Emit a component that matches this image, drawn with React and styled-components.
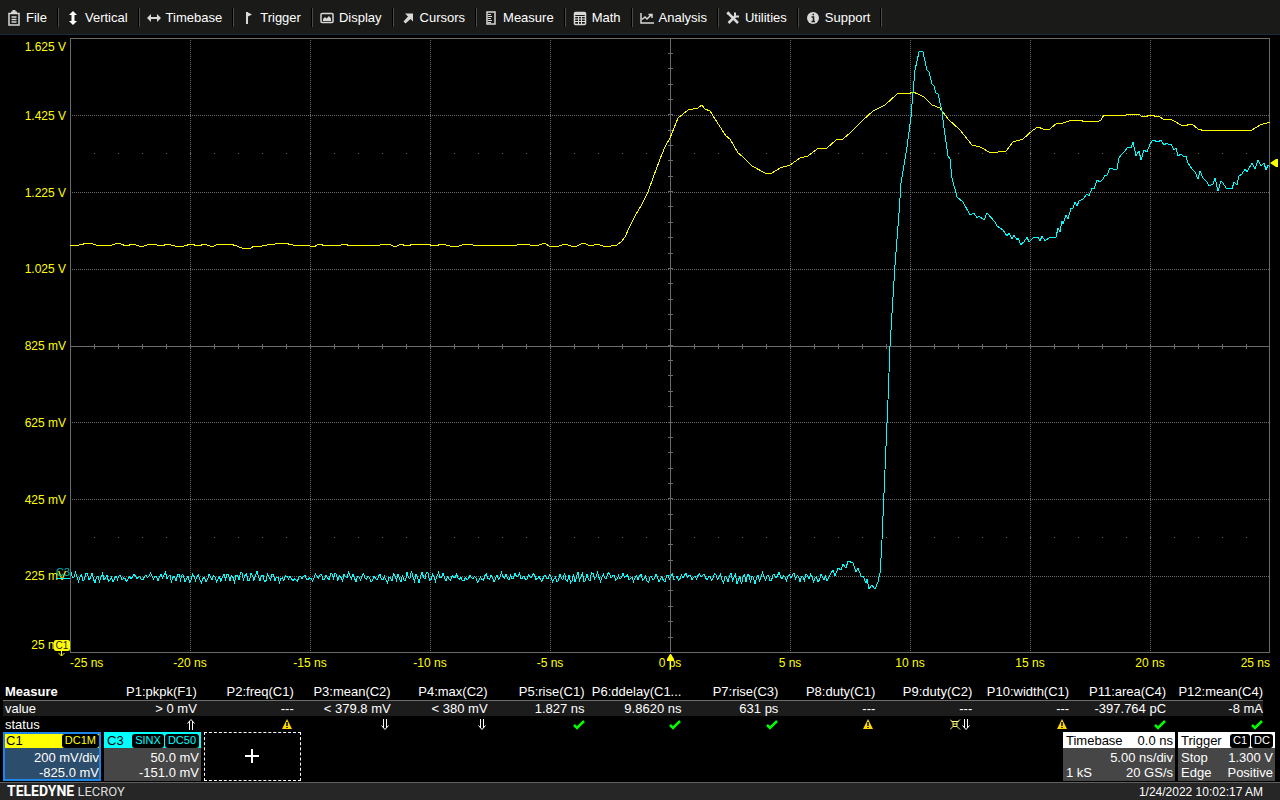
import styled, { createGlobalStyle } from 'styled-components';

const GlobalStyle = createGlobalStyle`
  * {
    box-sizing: border-box;
  }
  body {
    margin: 0;
    background: #000;
    color: #fff;
    font: 13px/16px "Liberation Sans", Arial, sans-serif;
  }
  button {
    margin: 0;
    color: inherit;
    font: inherit;
    cursor: pointer;
  }
`;

const Screen = styled.div`
  display: flex;
  flex-direction: column;
  height: 100vh;
  min-height: 480px;
`;

const MenuBar = styled.nav`
  display: flex;
  align-items: center;
  height: 35px;
  flex-shrink: 0;
  background: #1a1a18;
  border-bottom: 1px solid #1c2b3b;
`;

const MenuButton = styled.button`
  display: flex;
  align-items: center;
  gap: 5px;
  height: 19px;
  padding: 1px 11px 0 7px;
  background: none;
  border: 0;
  border-right: 1px solid #4a4a48;
  box-shadow: inset -1px 0 0 #000;
`;

const MenuIcon = styled.svg`
  width: 14px;
  height: 16px;
  fill: none;
  stroke: #d8d8d8;
  stroke-width: 1.5;
`;

const Scope = styled.main`
  display: grid;
  grid-template: minmax(0, 1fr) 31px / 70px minmax(0, 1fr);
  flex: 1;
  min-height: 0;
  padding: 3px 10px 0 0;
  color: #ff0;
  font-size: 12px;
`;

const VoltAxis = styled.div`
  position: relative;
  display: grid;
  grid-template-rows: 1fr repeat(7, 2fr) 1fr;
  align-items: center;
  justify-items: end;
  padding: 1px 4px 0 0;

  span:first-child {
    align-self: start;
  }
  span:nth-child(9) {
    align-self: end;
  }
`;

const TimeAxis = styled.div`
  position: relative;
  grid-column: 2;
  display: grid;
  grid-template-columns: 1fr repeat(9, 2fr) 1fr;
  justify-items: center;
  padding-top: 2px;
  white-space: nowrap;

  span:first-child {
    justify-self: start;
  }
  span:nth-child(11) {
    justify-self: end;
  }
`;

const Plot = styled.div`
  position: relative;
  min-height: 0;
`;

const PlotSvg = styled.svg`
  display: block;
  width: 100%;
  height: 100%;
  fill: none;
  stroke-width: 1;
  shape-rendering: crispEdges;

  path,
  polyline,
  line,
  rect {
    vector-effect: non-scaling-stroke;
  }
`;

const LevelMarker = styled.svg`
  position: absolute;
  top: 20%;
  left: 100%;
  width: 9px;
  height: 8px;
  margin-top: -2px;
  fill: #ff0;
`;

const DelayMarker = styled.svg`
  position: absolute;
  top: 0;
  left: 50%;
  width: 9px;
  height: 16px;
  margin-left: -4px;
  fill: #ff0;
`;

const ChannelTag = styled.div`
  position: absolute;
  right: 0;
  bottom: 12%;
  color: #00b4b4;
  border-bottom: 1px solid #0ff;
  font-size: 11px;
  line-height: 11px;
`;

const ActiveTag = styled.div`
  position: absolute;
  right: 0;
  bottom: 2px;
  width: 16px;
  height: 11px;
  background: #ff0;
  border-radius: 2px;
  color: #222;
  font-size: 10px;
  line-height: 12px;
  text-align: center;

  svg {
    position: absolute;
    top: 11px;
    left: 3px;
  }
`;

const TableWrap = styled.section`
  padding: 0 17px 0 3px;
`;

const Table = styled.table`
  width: 100%;
  table-layout: fixed;
  border-collapse: collapse;

  th,
  td {
    height: 16px;
    padding: 0;
    line-height: 15px;
    text-align: right;
    font-weight: normal;
    white-space: nowrap;
  }
  th:first-child {
    padding-left: 2px;
    text-align: left;
  }
  thead th {
    border-bottom: 1px solid #6e6e6e;
  }
  thead th:first-child {
    font-weight: bold;
  }
`;

const ValueRow = styled.tr`
  background: #1c1c1c;
`;

const Status = styled.svg`
  display: inline-block;
  height: 11px;
  margin-right: ${(p) => p.$inset || 0}px;
  vertical-align: -1px;
`;

const Descriptors = styled.section`
  display: flex;
  gap: 3px;
  height: 50px;
  padding: 0 5px 1px 3px;
`;

const Box = styled.button`
  display: flex;
  flex-direction: column;
  width: ${(p) => p.$width || 97}px;
  padding: 0;
  background: ${(p) => (p.$active ? '#2d4d6c' : '#464646')};
  border: 0;
  outline: ${(p) => (p.$active ? '2px solid #1c86e8' : 'none')};
  outline-offset: -2px;
  line-height: 15px;
  text-align: left;
`;

const BoxHead = styled.span`
  display: flex;
  align-items: center;
  justify-content: space-between;
  align-self: stretch;
  height: 16px;
  margin-bottom: 2px;
  padding: 1px 2px 0 3px;
  background: ${(p) => p.$color || '#fff'};
  color: #000;
`;

const Badges = styled.span`
  display: flex;
  gap: 1px;
`;

const Badge = styled.span`
  height: 14px;
  padding: 0 3px;
  background: #000;
  border-radius: 3px;
  color: ${(p) => p.$color || '#fff'};
  font-size: 11px;
  line-height: 13px;
`;

const BoxLine = styled.span`
  display: flex;
  justify-content: space-between;
  align-self: stretch;
  padding: 0 2px 0 3px;

  span:last-child {
    margin-left: auto;
  }
`;

const AddButton = styled.button`
  display: grid;
  place-items: center;
  width: 97px;
  padding: 0;
  background: #000;
  border: 1px dashed #fff;
`;

const Spacer = styled.div`
  flex: 1;
`;

const Footer = styled.footer`
  display: flex;
  align-items: center;
  justify-content: space-between;
  height: 18px;
  padding: 0 17px 0 7px;
  background: #262626;
  border-top: 1px solid #606060;
  font-size: 12px;
`;

const Brand = styled.span`
  color: #ddd;
  font: 13px/16px Roboto, sans-serif;

  b {
    color: #fff;
    font-size: 14px;
  }
`;

const icons = {
  file: (
    <>
      <path d="M2 3.500h10v11.500H2z" />
      <path d="M4 2.500h6M5.500 1h3" strokeWidth="2" />
      <path d="M4.500 7h5M4.500 9.500h5M4.500 12h5" />
    </>
  ),
  vertical: <path d="M7 1l4 4H8.500v6H11l-4 4-4-4h2.500V5H3z" fill="#fff" stroke="none" />,
  timebase: <path d="M0 8l4-4v3h6V4l4 4-4 4V9H4v3z" fill="#d8d8d8" stroke="none" />,
  trigger: (
    <>
      <path d="M6 14V2" strokeWidth="2" />
      <path d="M6 2l5 2.500L6 7z" fill="#d8d8d8" stroke="none" />
    </>
  ),
  display: (
    <>
      <rect x="1" y="3.500" width="12" height="9" rx="1" />
      <path d="M3 11V9l2-2 1.500 1.500L9 6l2 2.500V11z" fill="#d8d8d8" stroke="none" />
    </>
  ),
  cursors: <path d="M4 3.500h8v8L9.500 9 4.500 13.500 2.500 11.500 7 6.500z" fill="#d8d8d8" stroke="none" />,
  measure: (
    <>
      <rect x="3" y="2" width="8" height="12" />
      <path d="M4 4.500h3M4 6.500h4M4 8.500h3M4 10.500h4M4 12.500h3" strokeWidth="1" />
    </>
  ),
  math: (
    <>
      <rect x="1.500" y="2.500" width="11" height="12" rx="1" />
      <path d="M2 4h10" strokeWidth="2" />
      <path d="M2 6.500h10M2 9h10M2 11.500h10M5.500 6.500v8M8.500 6.500v8" strokeWidth="1" />
    </>
  ),
  analysis: (
    <>
      <path d="M1 3v10h13" />
      <path d="M2 9.500l3-2.500 2 2 4-4M8.500 4.500H12V8" />
    </>
  ),
  utilities: (
    <>
      <path d="M2 3l10 10" strokeWidth="2.500" />
      <path d="M2.500 13l7-7" strokeWidth="2.500" />
      <path d="M9 2.500v4h4M1 4l2-2" strokeWidth="2" />
    </>
  ),
  support: (
    <>
      <circle cx="7" cy="8" r="6" fill="#d8d8d8" stroke="none" />
      <path d="M5.500 7h2v4M5.500 11.500h3.500M6.500 4.500h1.500" stroke="#1a1a18" />
    </>
  ),
};

const menu = [
  ['File', 'file'],
  ['Vertical', 'vertical'],
  ['Timebase', 'timebase'],
  ['Trigger', 'trigger'],
  ['Display', 'display'],
  ['Cursors', 'cursors'],
  ['Measure', 'measure'],
  ['Math', 'math'],
  ['Analysis', 'analysis'],
  ['Utilities', 'utilities'],
  ['Support', 'support'],
];

const volts = ['1.625 V', '1.425 V', '1.225 V', '1.025 V', '825 mV', '625 mV', '425 mV', '225 mV', '25 mV'];
const times = ['-25 ns', '-20 ns', '-15 ns', '-10 ns', '-5 ns', '0 ps', '5 ns', '10 ns', '15 ns', '20 ns', '25 ns'];

const measures = [
  ['P1:pkpk(F1)', '> 0 mV', 'up'],
  ['P2:freq(C1)', '---', 'warn'],
  ['P3:mean(C2)', '< 379.8 mV', 'down'],
  ['P4:max(C2)', '< 380 mV', 'down'],
  ['P5:rise(C1)', '1.827 ns', 'ok'],
  ['P6:ddelay(C1...', '9.8620 ns', 'ok'],
  ['P7:rise(C3)', '631 ps', 'ok'],
  ['P8:duty(C1)', '---', 'warn'],
  ['P9:duty(C2)', '---', 'none'],
  ['P10:width(C1)', '---', 'warn'],
  ['P11:area(C4)', '-397.764 pC', 'ok'],
  ['P12:mean(C4)', '-8 mA', 'ok'],
];

const c1Trace = `70,245 77,246 79,245 88,243 93,244 96,245 112,245 118,243 121,244 126,246 133,244 142,247 149,244
157,245 162,246 167,244 175,246 184,246 191,244 198,246 205,244 212,247 218,244 225,245 230,244 237,246 244,249
251,248 254,246 262,246 267,245 284,243 293,245 306,245 314,247 319,244 326,246 330,245 338,246 344,244 351,246
356,245 380,245 389,244 395,247 401,244 406,246 415,244 425,244 436,246 441,244 455,247 466,244 473,245 484,245
491,246 517,245 523,244 530,245 536,246 545,243 549,246 557,247 564,244 575,247 583,243 591,246 597,244 606,247
617,245 621,242 625,237 630,226 635,216 642,204 648,192 653,178 660,159 665,147 670,138 674,128 678,118 688,110
698,108 702,105 705,109 710,111 715,119 726,136 730,139 738,153 742,156 752,166 765,173 772,173 780,168 790,165
800,158 808,156 817,149 827,148 836,140 843,139 850,133 862,121 873,111 885,105 897,94 903,93 908,94 913,92
918,94 924,97 932,105 940,108 948,119 960,130 972,145 980,147 991,153 1006,151 1013,142 1023,139 1033,130
1038,127 1043,129 1050,129 1057,123 1060,124 1072,120 1078,120 1087,122 1092,121 1097,122 1101,120 1104,115
1115,115 1122,116 1130,114 1138,114 1143,117 1152,115 1157,117 1159,116 1163,119 1172,120 1183,126 1192,124
1198,129 1205,131 1217,130 1232,131 1240,130 1252,130 1260,125 1270,122`;

// ripple on the flat part of C3, before the pulse arrives
const ripple = Array.from({ length: 504 }, (_, i) => {
  const x = 71 + i * 1.5;
  const swell = 3.2 + 1.6 * Math.sin(x * 0.057) * Math.sin(x * 0.021 + 2);
  const y = 577.5 + swell * Math.sin(x * 1.29 + 1.5 * Math.sin(x * 0.11)) + 1.6 * Math.sin(x * 0.41) + Math.sin(x * 0.07);
  return `${x},${y.toFixed(1)}`;
}).join(' ');

const c3Trace = `${ripple} 827,581 831,573 833,570 835,576 838,568 841,570 843,564 846,568 848,561 853,563 856,572
858,568 861,576 863,576 866,583 867,579 869,589 872,585 875,589 878,582 880,573 881,558 882,540 885,470 888,400
890,346 895,265 899,213 901,183 907,147 911,117 913,92 915,70 919,52 920,51 923,52 927,70 929,72 932,84 934,86
936,93 938,94 942,111 944,128 948,156 950,159 952,178 957,197 963,202 970,215 974,213 977,218 979,216 984,220
987,213 995,222 997,226 1003,230 1007,236 1009,233 1012,239 1014,235 1017,240 1018,238 1021,245 1023,242
1024,242 1027,237 1029,242 1033,238 1038,237 1040,241 1042,236 1045,241 1050,237 1056,237 1058,228 1060,232
1062,221 1063,224 1066,215 1068,219 1071,208 1073,208 1075,202 1077,206 1079,201 1083,199 1087,194 1089,196
1092,188 1094,189 1097,180 1100,182 1103,179 1105,175 1107,175 1110,168 1113,169 1117,169 1119,158 1122,154
1125,151 1128,147 1131,148 1133,142 1136,156 1139,151 1141,160 1144,150 1147,152 1150,144 1153,140 1158,142
1161,140 1164,145 1167,143 1169,145 1171,144 1174,150 1176,148 1178,156 1181,154 1184,157 1186,156 1188,163
1192,169 1195,172 1198,179 1200,171 1203,178 1207,182 1209,186 1213,184 1215,178 1218,191 1221,181 1223,183
1226,188 1232,189 1234,182 1237,185 1239,176 1242,174 1245,169 1247,172 1252,163 1255,169 1258,160 1261,166
1264,163 1266,170 1268,165 1270,167`;

function Graticule() {
  const cols = [1, 2, 3, 4, 6, 7, 8, 9].map((n) => 70.5 + n * 120);
  const rows = [1, 2, 3, 5, 6, 7].map((n) => Math.ceil(38 + n * 76.8) + 0.5);
  const xTicks = Array.from({ length: 49 }, (_, i) => 70.5 + (i + 1) * 24);
  const yTicks = Array.from({ length: 39 }, (_, i) => Math.floor(38 + (i + 1) * 15.36) + 0.5);
  return (
    <g stroke="#6a6a6a">
      <rect x="70.5" y="38.5" width="1199" height="614" />
      {cols.map((x) => (
        <line key={x} x1={x} x2={x} y1="40" y2="652" strokeDasharray="1 1" />
      ))}
      {rows.map((y) => (
        <line key={y} x1="72" x2="1269" y1={y} y2={y} strokeDasharray="1 1" />
      ))}
      <path d="M670.5 38V652M70 346.5H1270" />
      {xTicks.map((x) => (
        <path key={x} d={`M${x} 344v5M${x - 0.5} 153.500h1M${x - 0.5} 537.500h1`} />
      ))}
      {yTicks.map((y) => (
        <path key={y} d={`M668 ${y}h5`} />
      ))}
    </g>
  );
}

function StatusIcon({ kind }) {
  if (kind === 'ok') {
    return (
      <Status width="12" viewBox="0 0 12 11">
        <path d="M1 6l3 3 7-7" fill="none" stroke="#0f0" strokeWidth="2.5" />
      </Status>
    );
  }
  if (kind === 'warn') {
    return (
      <Status width="10" viewBox="0 0 10 11" $inset={2}>
        <path d="M5 0l5 10H0z" fill="#ffd800" />
        <path d="M5 3v4M5 8v1" stroke="#000" strokeWidth="1.5" />
      </Status>
    );
  }
  const down = 'M2.500 0v9M5.500 0v9M.5 6.500L4 10.500l3.500-4';
  if (kind === 'none') {
    return (
      <Status width="20" viewBox="0 0 20 11" $inset={2}>
        <g fill="none" stroke="#fff">
          <path d="M0 .5l3 3v4l-3 3M10 .5l-3 3v4l3 3M1.500 2.500h7M3 7.500h4M3 5h4" stroke="#ffff80" />
          <path d={down} transform="translate(12 0)" />
        </g>
      </Status>
    );
  }
  return (
    <Status width="8" viewBox="0 0 8 11" $inset={2}>
      <path d={down} fill="none" stroke="#fff" transform={kind === 'up' ? 'rotate(180 4 5.5)' : undefined} />
    </Status>
  );
}

function App() {
  return (
    <Screen>
      <GlobalStyle />
      <MenuBar>
        {menu.map(([label, icon]) => (
          <MenuButton key={label}>
            <MenuIcon viewBox="0 0 14 16">{icons[icon]}</MenuIcon>
            {label}
          </MenuButton>
        ))}
      </MenuBar>

      <Scope>
        <VoltAxis>
          {volts.map((v) => (
            <span key={v}>{v}</span>
          ))}
          <ChannelTag>C3</ChannelTag>
          <ActiveTag>
            C1
            <svg width="8" height="6" viewBox="0 0 8 6" fill="none" stroke="#ff0">
              <path d="M4.500 0v5M1.500 2l3 3 3-3" />
            </svg>
          </ActiveTag>
        </VoltAxis>
        <Plot>
          <PlotSvg viewBox="70 38 1200 615" preserveAspectRatio="none">
            <Graticule />
            <polyline points={c1Trace} stroke="#ff0" />
            <polyline points={c3Trace} stroke="#0ff" />
          </PlotSvg>
          <LevelMarker viewBox="0 0 9 8">
            <path d="M0 4l6-4h2v8H6z" />
          </LevelMarker>
        </Plot>
        <TimeAxis>
          {times.map((t) => (
            <span key={t}>{t}</span>
          ))}
          <DelayMarker viewBox="0 0 9 16">
            <path d="M4 1h1l3 5v2H5v8H4V8H1V6z" />
          </DelayMarker>
        </TimeAxis>
      </Scope>

      <TableWrap>
        <Table>
          <thead>
            <tr>
              <th>Measure</th>
              {measures.map(([name]) => (
                <th key={name}>{name}</th>
              ))}
            </tr>
          </thead>
          <tbody>
            <ValueRow>
              <th>value</th>
              {measures.map(([name, value]) => (
                <td key={name}>{value}</td>
              ))}
            </ValueRow>
            <tr>
              <th>status</th>
              {measures.map(([name, , status]) => (
                <td key={name}>
                  <StatusIcon kind={status} />
                </td>
              ))}
            </tr>
          </tbody>
        </Table>
      </TableWrap>

      <Descriptors>
        <Box $active $width={98}>
          <BoxHead $color="#ff0">
            C1
            <Badge $color="#ff0">DC1M</Badge>
          </BoxHead>
          <BoxLine>
            <span>200 mV/div</span>
          </BoxLine>
          <BoxLine>
            <span>-825.0 mV</span>
          </BoxLine>
        </Box>
        <Box>
          <BoxHead $color="#0ff">
            C3
            <Badges>
              <Badge $color="#0ff">SINX</Badge>
              <Badge $color="#0ff">DC50</Badge>
            </Badges>
          </BoxHead>
          <BoxLine>
            <span>50.0 mV</span>
          </BoxLine>
          <BoxLine>
            <span>-151.0 mV</span>
          </BoxLine>
        </Box>
        <AddButton aria-label="Add trace">
          <svg width="15" height="15" stroke="#fff" strokeWidth="2">
            <path d="M7 0v14M0 7h14" />
          </svg>
        </AddButton>
        <Spacer />
        <Box $width={112}>
          <BoxHead>
            <span>Timebase</span>
            <span>0.0 ns</span>
          </BoxHead>
          <BoxLine>
            <span>5.00 ns/div</span>
          </BoxLine>
          <BoxLine>
            <span>1 kS</span>
            <span>20 GS/s</span>
          </BoxLine>
        </Box>
        <Box>
          <BoxHead>
            Trigger
            <Badges>
              <Badge>C1</Badge>
              <Badge>DC</Badge>
            </Badges>
          </BoxHead>
          <BoxLine>
            <span>Stop</span>
            <span>1.300 V</span>
          </BoxLine>
          <BoxLine>
            <span>Edge</span>
            <span>Positive</span>
          </BoxLine>
        </Box>
      </Descriptors>

      <Footer>
        <Brand>
          <b>TELEDYNE</b> LECROY
        </Brand>
        <time>1/24/2022 10:02:17 AM</time>
      </Footer>
    </Screen>
  );
}

export default App;
